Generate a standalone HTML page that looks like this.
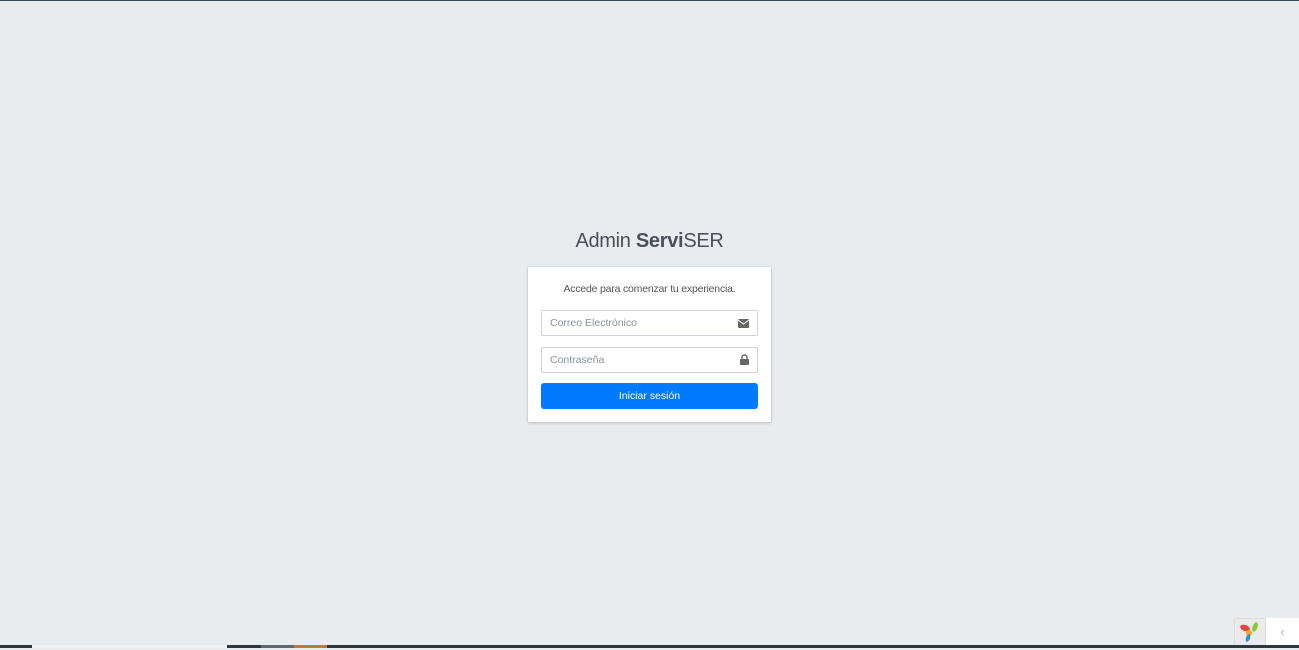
<!DOCTYPE html>
<html><head><meta charset="utf-8"><style>
body{margin:0;width:1299px;height:648px;background:#e9ecef;font-family:"Liberation Sans",sans-serif;position:relative;overflow:hidden;border-top:1px solid #3a4a52;box-sizing:border-box}
.title{position:absolute;left:0;width:1299px;top:229px;text-align:center;font-size:20px;color:#495057;font-weight:300;letter-spacing:-0.3px}
.card{position:absolute;left:528px;top:266px;width:243px;height:155px;background:#fff;box-shadow:0 0 1px rgba(0,0,0,.13),0 1px 3px rgba(0,0,0,.2)}
.msg{position:absolute;top:16px;width:100%;text-align:center;font-size:10.5px;color:#555;letter-spacing:-0.2px}
.inp{position:absolute;left:13px;width:217px;height:26px;border:1px solid #ced4da;border-radius:2px;font-size:10.5px;color:#8a939b;line-height:24px;padding-left:8px;box-sizing:border-box}
.btn{position:absolute;left:13px;top:116px;width:217px;height:26px;background:#007bff;border-radius:3px;color:#fff;text-align:center;line-height:26px;font-size:10.5px}
.ic{position:absolute;right:8px;top:8px}
.bar{position:absolute;bottom:0;height:3px}
</style></head><body>
<div class="title">Admin <b style="font-weight:600">Servi</b>SER</div>
<div class="card">
<div class="msg">Accede para comenzar tu experiencia.</div>
<div class="inp" style="top:43px">Correo Electrónico<svg class="ic" width="11" height="9" viewBox="0 0 11 9"><rect width="11" height="9" rx="1" fill="#666"/><path d="M0 1l5.5 4L11 1" stroke="#fff" fill="none"/></svg></div>
<div class="inp" style="top:80px">Contraseña<svg class="ic" style="top:6px" width="9" height="11" viewBox="0 0 9 11"><path d="M2 5V3.5a2.5 2.5 0 015 0V5" stroke="#666" stroke-width="1.5" fill="none"/><rect y="5" width="9" height="6" rx="1" fill="#666"/></svg></div>
<div class="btn">Iniciar sesión</div>
</div>
<div style="position:absolute;left:1234px;top:617px;width:32px;height:28px;background:#eaeaea;border:1px solid #ddd;box-sizing:border-box"><svg width="30" height="26" viewBox="0 0 30 26"><ellipse cx="10" cy="9" rx="5" ry="3" fill="#e8453c" transform="rotate(20 10 9)"/><ellipse cx="20" cy="8" rx="2.5" ry="5" fill="#8cc63f" transform="rotate(20 20 8)"/><ellipse cx="14" cy="14" rx="3" ry="3" fill="#f7a823"/><ellipse cx="13" cy="19" rx="2" ry="4" fill="#2b8fd6" transform="rotate(20 13 19)"/></svg></div>
<div style="position:absolute;left:1266px;top:617px;width:33px;height:28px;background:#fff;color:#aaa;font-size:12px;text-align:center;line-height:28px">‹</div>
<div class="bar" style="left:0;width:1299px;background:#2b3a42"></div>
<div class="bar" style="left:32px;width:195px;background:#f0f0f0"></div>
<div class="bar" style="left:261px;width:33px;background:#5a6a70"></div>
<div class="bar" style="left:294px;width:33px;background:#c8763a"></div>
</body></html>
